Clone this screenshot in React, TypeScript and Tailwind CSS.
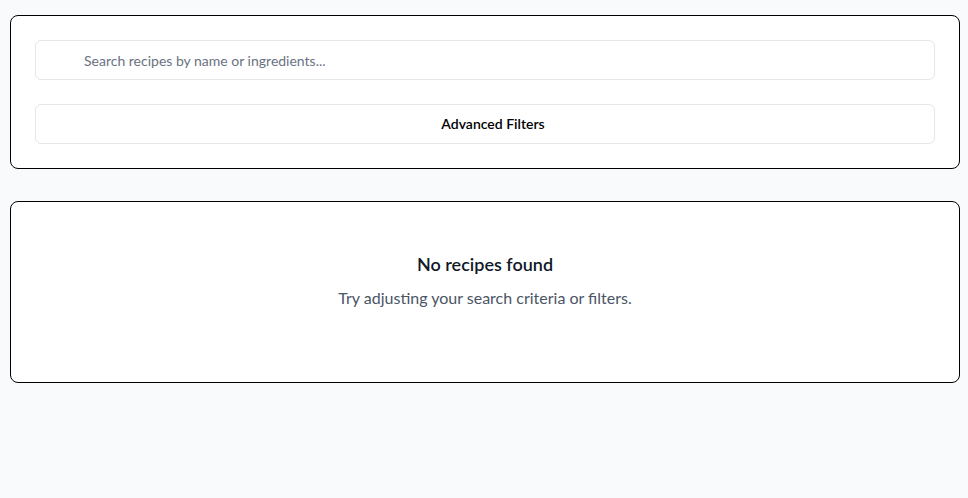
export default function App() {
  return (
    <div className="min-h-screen bg-gray-50 pl-[10px] pr-[8px] pt-[15px]" style={{ fontFamily: 'Lato, sans-serif' }}>
      <section className="rounded-lg border border-black bg-white p-6">
        <input
          type="text"
          placeholder="Search recipes by name or ingredients..."
          className="block h-10 w-full rounded-md border border-gray-200 bg-white pl-12 text-sm text-gray-900 placeholder:text-gray-500 outline-none"
        />
        <button className="mt-6 flex h-10 w-full items-center justify-center rounded-md border border-gray-200 bg-white text-sm font-semibold text-black">
          <span className="inline-block w-4" />
          Advanced Filters
        </button>
      </section>

      <section className="mt-8 rounded-lg border border-black bg-white pt-12 pb-[72px] text-center">
        <h3 className="text-lg font-semibold text-gray-900">No recipes found</h3>
        <p className="mt-2 text-base text-gray-600">Try adjusting your search criteria or filters.</p>
      </section>
    </div>
  );
}
